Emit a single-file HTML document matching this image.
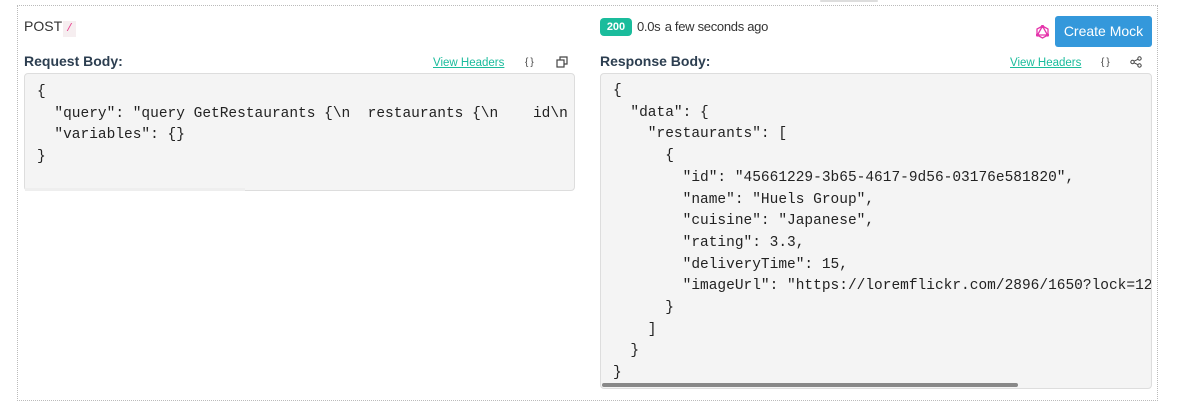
<!DOCTYPE html>
<html><head><style>
body{margin:0;background:#fff;width:1180px;height:419px;position:relative;font-family:"Liberation Sans",sans-serif;color:#333;overflow:hidden}
.outer{position:absolute;left:17px;top:5px;width:1139px;height:394px;border:1px dotted #bbb}
.abs{position:absolute}
.lbl{font-weight:bold;font-size:14px;color:#2c3e50}
.vh{font-size:11.5px;color:#1abc9c;text-decoration:underline}
.br{font-size:10px;color:#444;letter-spacing:2px}
.code{position:absolute;background:#f4f4f4;border:1px solid #ddd;border-radius:4px;overflow:hidden;font-family:"Liberation Mono",monospace;font-size:14.5px;line-height:21.7px;color:#222;white-space:pre}
</style></head><body>
<div class="outer"></div>
<div class="abs" style="left:820px;top:0;width:58px;height:2px;background:#ddd;border-radius:2px"></div>
<div class="abs" style="left:24px;top:18px;font-size:14px;color:#333">POST<span style="background:#f6eef0;color:#e83e8c;font-size:11px;padding:2px 3px;margin-left:1px;font-family:'Liberation Mono',monospace">/</span></div>
<div class="abs lbl" style="left:24px;top:53px">Request Body:</div>
<div class="abs vh" style="left:433px;top:57px">View Headers</div>
<div class="abs br" style="left:525px;top:57px">{}</div>
<svg class="abs" style="left:556px;top:56px" width="12" height="12" viewBox="0 0 12 12" fill="none" stroke="#444" stroke-width="1.2"><rect x="1" y="4" width="7" height="7"/><path d="M4 4V1h7v7H8"/></svg>
<div class="code" style="left:24px;top:73px;width:551px;height:118px;padding:8px 0 0 12px;box-sizing:border-box">{
  "query": "query GetRestaurants {\n  restaurants {\n    id\n
  "variables": {}
}</div>
<div class="abs" style="left:25px;top:188px;width:220px;height:3px;background:#eee"></div>

<div class="abs" style="left:600px;top:18px;width:32px;height:18px;background:#1abc9c;border-radius:4px;color:#fff;font-size:11px;text-align:center;line-height:18px;font-weight:bold">200</div>
<div class="abs" style="left:637px;top:19px;font-size:13px;color:#333;letter-spacing:-0.3px">0.0s <span style="margin-left:1px">a few seconds ago</span></div>
<svg class="abs" style="left:1036px;top:25px" width="13" height="14" viewBox="0 0 13 14" fill="none" stroke="#e535ab" stroke-width="1.3"><path d="M6.5 1L12 4v6L6.5 13 1 10V4z M6.5 1L1.5 10h10z"/><circle cx="6.5" cy="1.5" r="1" fill="#e535ab"/><circle cx="1.5" cy="10" r="1" fill="#e535ab"/><circle cx="11.5" cy="10" r="1" fill="#e535ab"/></svg>
<div class="abs" style="left:1055px;top:16px;width:97px;height:31px;background:#3498db;border-radius:3px;color:#fff;font-size:14px;line-height:31px;text-align:center">Create Mock</div>
<div class="abs lbl" style="left:600px;top:53px">Response Body:</div>
<div class="abs vh" style="left:1010px;top:57px">View Headers</div>
<div class="abs br" style="left:1101px;top:57px">{}</div>
<svg class="abs" style="left:1130px;top:56px" width="12" height="12" viewBox="0 0 12 12" fill="none" stroke="#444" stroke-width="1"><circle cx="2.5" cy="6" r="1.7"/><circle cx="9.5" cy="2.5" r="1.7"/><circle cx="9.5" cy="9.5" r="1.7"/><path d="M4 5.2L8 3.3M4 6.8L8 8.7"/></svg>
<div class="code" style="left:600px;top:73px;width:552px;height:316px;padding:7px 0 0 12px;box-sizing:border-box">{
  "data": {
    "restaurants": [
      {
        "id": "45661229-3b65-4617-9d56-03176e581820",
        "name": "Huels Group",
        "cuisine": "Japanese",
        "rating": 3.3,
        "deliveryTime": 15,
        "imageUrl": "https://loremflickr.com/2896/1650?lock=1243
      }
    ]
  }
}</div>
<div class="abs" style="left:602px;top:383px;width:416px;height:4px;background:#888;border-radius:2px"></div>
</body></html>
